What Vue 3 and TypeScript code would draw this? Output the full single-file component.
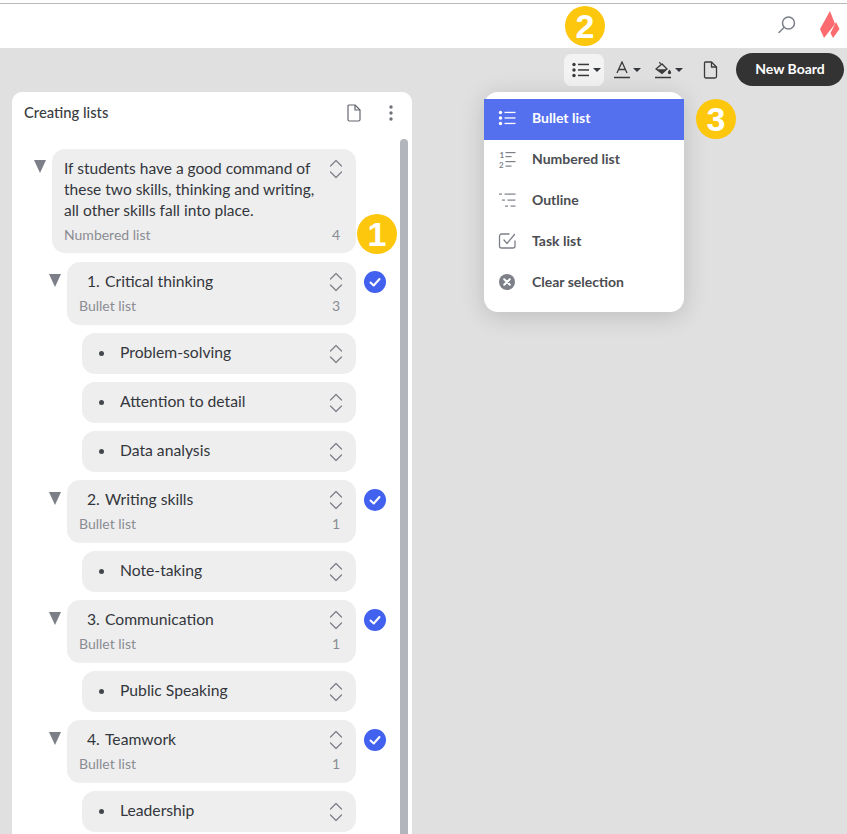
<script setup lang="ts">
interface Group { num: string; title: string; count: string; leaves: string[] }
const groups: Group[] = [
  { num: '1.', title: 'Critical thinking', count: '3', leaves: ['Problem-solving', 'Attention to detail', 'Data analysis'] },
  { num: '2.', title: 'Writing skills', count: '1', leaves: ['Note-taking'] },
  { num: '3.', title: 'Communication', count: '1', leaves: ['Public Speaking'] },
  { num: '4.', title: 'Teamwork', count: '1', leaves: ['Leadership'] },
]
const menu = [
  { label: 'Bullet list', icon: 'bullet', active: true },
  { label: 'Numbered list', icon: 'number', active: false },
  { label: 'Outline', icon: 'outline', active: false },
  { label: 'Task list', icon: 'task', active: false },
  { label: 'Clear selection', icon: 'clear', active: false },
]
</script>

<template>
  <div class="page">
    <header class="top">
      <svg class="search" width="20" height="20" viewBox="0 0 20 20" fill="none" stroke="#7b7f88" stroke-width="1.5"><circle cx="11.5" cy="8" r="6" /><path d="M7 12.5 2 17.5" stroke-linecap="round" /></svg>
      <svg class="logo" width="21" height="28" viewBox="0 0 21 28"><path d="M11 0 16 13 5 27 1 18Z" fill="#fb6b6f" /><path d="M17 11 20.500 18 14 27 11.500 22Z" fill="#fb6b6f" /></svg>
    </header>

    <div class="toolbar">
      <button class="tool tool-on">
        <svg width="18" height="16" viewBox="0 0 18 16" fill="#3a3a3a"><circle cx="2" cy="2.500" r="1.700" /><circle cx="2" cy="8" r="1.700" /><circle cx="2" cy="13.500" r="1.700" /><rect x="6" y="1.700" width="11" height="1.500" /><rect x="6" y="7.200" width="11" height="1.500" /><rect x="6" y="12.700" width="11" height="1.500" /></svg>
        <i class="caret" />
      </button>
      <button class="tool">
        <svg width="16" height="18" viewBox="0 0 16 18" fill="none" stroke="#3a3a3a" stroke-width="1.300"><path d="M3 12 8 1l5 11M4.600 8.500h6.800" /><path d="M0 16.500h16" stroke-width="1.500" /></svg>
        <i class="caret" />
      </button>
      <button class="tool">
        <svg width="17" height="18" viewBox="0 0 17 18" fill="none" stroke="#3a3a3a" stroke-width="1.300"><path d="M1 8 7 3l5 5-5 4.500Z" /><path d="M1.500 8.200 7 12.500 11.700 8.200Z" fill="#3a3a3a" stroke="none" /><path d="M5.500 3 4.500 1" /><path d="M14.500 8.500c1 1.500 1.700 2.200 1.700 3a1.700 1.700 0 0 1-3.400 0c0-.8.700-1.500 1.700-3Z" fill="#3a3a3a" stroke="none" /><path d="M0 16.500h16" stroke-width="1.500" /></svg>
        <i class="caret" />
      </button>
      <button class="tool tool-doc">
        <svg width="15" height="18" viewBox="0 0 14 18" fill="none" stroke="#3a3a3a" stroke-width="1.300" stroke-linejoin="round"><path d="M2 1h6l5 5v9.500a1.500 1.500 0 0 1-1.500 1.500h-9A1.500 1.500 0 0 1 1 15.500V2a1 1 0 0 1 1-1Z" /><path d="M8 1v5h5" /></svg>
      </button>
      <button class="new-board">New Board</button>
    </div>

    <main class="workspace">
      <section class="panel">
        <div class="panel-head">
          <h2>Creating lists</h2>
          <svg class="head-doc" width="14" height="18" viewBox="0 0 14 18" fill="none" stroke="#63666e" stroke-width="1.200" stroke-linejoin="round"><path d="M2 1h6l5 5v9.500a1.500 1.500 0 0 1-1.500 1.500h-9A1.500 1.500 0 0 1 1 15.500V2a1 1 0 0 1 1-1Z" /><path d="M8 1v5h5" /></svg>
          <svg class="head-more" width="4" height="16" viewBox="0 0 4 16" fill="#6f7279"><circle cx="2" cy="2" r="1.700" /><circle cx="2" cy="8" r="1.700" /><circle cx="2" cy="14" r="1.700" /></svg>
        </div>

        <div class="tree">
          <div class="scrollbar" />
          <div class="row row-root">
            <i class="tri" />
            <div class="card card-root">
              <div class="card-main">
                <p class="root-text">If students have a good command of these two skills, thinking and writing, all other skills fall into place.</p>
                <svg class="updown" width="14" height="20" viewBox="0 0 14 20" fill="none" stroke="#7c7f87" stroke-width="1.200" stroke-linecap="round" stroke-linejoin="round"><path d="M1.500 7 7 1.500 12.500 7M1.500 13 7 18.500 12.500 13" /></svg>
              </div>
              <div class="meta"><span>Numbered list</span><span>4</span></div>
            </div>
          </div>

          <template v-for="g in groups" :key="g.num">
            <div class="row row-group">
              <i class="tri" />
              <div class="card">
                <div class="card-main">
                  <span class="num">{{ g.num }}</span>
                  <span class="title">{{ g.title }}</span>
                  <svg class="updown" width="14" height="20" viewBox="0 0 14 20" fill="none" stroke="#7c7f87" stroke-width="1.200" stroke-linecap="round" stroke-linejoin="round"><path d="M1.500 7 7 1.500 12.500 7M1.500 13 7 18.500 12.500 13" /></svg>
                </div>
                <div class="meta"><span>Bullet list</span><span>{{ g.count }}</span></div>
              </div>
              <svg class="check" width="22" height="22" viewBox="0 0 22 22"><circle cx="11" cy="11" r="11" fill="#4261ee" /><path d="M6.500 11.500 9.700 14.500 15.500 8" fill="none" stroke="#fff" stroke-width="2" stroke-linecap="round" stroke-linejoin="round" /></svg>
            </div>
            <div v-for="leaf in g.leaves" :key="leaf" class="row row-leaf">
              <div class="card leaf">
                <i class="dot" />
                <span class="title">{{ leaf }}</span>
                <svg class="updown" width="14" height="20" viewBox="0 0 14 20" fill="none" stroke="#7c7f87" stroke-width="1.200" stroke-linecap="round" stroke-linejoin="round"><path d="M1.500 7 7 1.500 12.500 7M1.500 13 7 18.500 12.500 13" /></svg>
              </div>
            </div>
          </template>
        </div>
      </section>

      <nav class="menu">
        <div v-for="m in menu" :key="m.label" class="menu-item" :class="{ active: m.active }">
          <svg v-if="m.icon === 'bullet'" width="18" height="16" viewBox="0 0 18 16" fill="#fff"><circle cx="2.500" cy="2.500" r="1.700" /><circle cx="2.500" cy="8" r="1.700" /><circle cx="2.500" cy="13.500" r="1.700" /><rect x="6.500" y="1.800" width="11" height="1.300" /><rect x="6.500" y="7.300" width="11" height="1.300" /><rect x="6.500" y="12.800" width="11" height="1.300" /></svg>
          <svg v-else-if="m.icon === 'number'" width="18" height="18" viewBox="0 0 18 18" fill="#7d8089"><text x="1.500" y="7.500" font-size="8" font-weight="700" font-family="Lato, sans-serif">1</text><text x="1" y="17.500" font-size="8" font-weight="700" font-family="Lato, sans-serif">2</text><rect x="7.500" y="2" width="10" height="1.200" /><rect x="7.500" y="6" width="6" height="1.200" /><rect x="7.500" y="11" width="10" height="1.200" /><rect x="7.500" y="15.500" width="6" height="1.200" /></svg>
          <svg v-else-if="m.icon === 'outline'" width="18" height="16" viewBox="0 0 18 16" fill="#7d8089"><rect x="1" y="1.500" width="3" height="1.200" /><rect x="6.500" y="1.500" width="11" height="1.200" /><rect x="4" y="7.500" width="3" height="1.200" /><rect x="9.500" y="7.500" width="8" height="1.200" /><rect x="7" y="13.500" width="3" height="1.200" /><rect x="12.500" y="13.500" width="5" height="1.200" /></svg>
          <svg v-else-if="m.icon === 'task'" width="18" height="18" viewBox="0 0 18 18" fill="none" stroke="#7d8089" stroke-width="1.300" stroke-linecap="round" stroke-linejoin="round"><path d="M11 2H3.500A2 2 0 0 0 1.500 4v10a2 2 0 0 0 2 2H15a2 2 0 0 0 2-2V9" /><path d="M6 8l3 3.500 7.500-9" /></svg>
          <svg v-else width="18" height="16" viewBox="0 0 18 16"><circle cx="9" cy="8" r="8" fill="#7d8089" /><path d="M6.200 5.200l5.600 5.600M11.800 5.200l-5.600 5.600" stroke="#fff" stroke-width="2" stroke-linecap="round" /></svg>
          <span>{{ m.label }}</span>
        </div>
      </nav>
    </main>

    <span class="badge badge-1">1</span>
    <span class="badge badge-2">2</span>
    <span class="badge badge-3">3</span>
  </div>
</template>

<style>
html, body { margin: 0; background: #e0e0e0; overflow: hidden; }
</style>

<style scoped>
.page {
  position: relative;
  width: 847px;
  height: 834px;
  overflow: hidden;
  display: flex;
  flex-direction: column;
  background: #e0e0e0;
  font-family: Lato, "Noto Sans", sans-serif;
  color: #33363c;
}
.top {
  height: 44px;
  margin-top: 3px;
  border-top: 1px solid #b8b8b8;
  background: #fff;
  flex: none;
  display: flex;
  align-items: center;
  justify-content: flex-end;
  padding-right: 7px;
  gap: 22px;
  box-shadow: 0 -3px 0 #fdfdfd;
}
.search { margin-top: -2px; }
.logo { margin-top: -2px; }
.toolbar {
  height: 33px;
  margin-top: 5px;
  flex: none;
  display: flex;
  align-items: center;
  padding-left: 564px;
}
.tool {
  border: 0;
  background: none;
  padding: 0;
  display: flex;
  align-items: center;
  gap: 3px;
  height: 32px;
  margin-right: 9px;
  width: 32px;
}
.tool-on {
  width: 40px;
  margin-right: 10px;
  padding-left: 8px;
  background: #f3f3f3;
  border-radius: 7px;
  box-sizing: border-box;
}
.tool-doc { width: 15px; margin-left: 7px; margin-right: 18px; }
.caret {
  width: 0;
  height: 0;
  border-left: 4px solid transparent;
  border-right: 4px solid transparent;
  border-top: 4px solid #33363c;
}
.new-board {
  width: 108px;
  height: 33px;
  border: 0;
  border-radius: 17px;
  background: #333333;
  color: #fff;
  font: 700 14px Lato, sans-serif;
  padding: 0 0 2px;
}
.workspace {
  position: relative;
  flex: 1;
  min-height: 0;
  padding: 6px 0 0 12px;
}
.panel {
  width: 400px;
  height: 100%;
  background: #fff;
  border-radius: 10px 10px 0 0;
  overflow: hidden;
}
.panel-head {
  height: 47px;
  box-sizing: border-box;
  padding: 0 19px 5px 12px;
  display: flex;
  align-items: center;
}
.panel-head h2 {
  margin: 0;
  padding-bottom: 2px;
  flex: 1;
  font-size: 14.800px;
  font-weight: 500;
  color: #3a3d42;
}
.head-doc { margin-right: 28px; }
.tree {
  position: relative;
  padding: 10px 0 0 22px;
  display: flex;
  flex-direction: column;
  gap: 8px;
}
.scrollbar {
  position: absolute;
  left: 388px;
  top: 0;
  bottom: -40px;
  width: 8px;
  border-radius: 4px 4px 0 0;
  background: #b3b5bc;
}
.row { position: relative; display: flex; align-items: flex-start; }
.row-root { padding-left: 18px; width: 304px; margin-bottom: 1px; }
.row-group { padding-left: 33px; width: 289px; }
.row-leaf { padding-left: 48px; width: 274px; }
.tri {
  position: absolute;
  top: 12px;
  width: 0;
  height: 0;
  border-left: 6.500px solid transparent;
  border-right: 6.500px solid transparent;
  border-top: 13px solid #7c7f87;
}
.row-root .tri { left: 0; top: 11px; }
.row-group .tri { left: 15px; }
.card {
  flex: 1;
  min-width: 0;
  background: #eeeeee;
  border-radius: 13px;
  padding: 8px 13px 10px 12px;
  box-sizing: border-box;
}
.card-root { padding-bottom: 9px; }
.card-root .meta { margin-top: 4px; }
.card-main { display: flex; align-items: flex-start; min-height: 22px; padding-top: 2px; }
.root-text {
  margin: -1px 0 1px;
  width: 252px;
  flex: none;
  font-size: 15.500px;
  line-height: 21px;
  color: #33363c;
}
.updown { flex: none; margin-left: auto; }
.num { font-size: 15.700px; line-height: 21px; width: 26px; padding-left: 8px; box-sizing: border-box; flex: none; margin-top: -1px; }
.title { font-size: 15.700px; line-height: 21px; color: #33363c; margin-top: -1px; }
.meta {
  display: flex;
  justify-content: space-between;
  margin-top: 3px;
  padding-right: 3px;
  font-size: 14px;
  line-height: 18px;
  color: #8a8c93;
}
.leaf {
  height: 41px;
  display: flex;
  align-items: center;
  padding: 0 13px 0 17px;
}
.leaf .title { margin-top: -2px; }
.dot {
  width: 5px;
  height: 5px;
  border-radius: 50%;
  background: #44474d;
  margin-right: 16px;
  flex: none;
}
.check { position: absolute; left: 330px; top: 9px; }
.menu {
  position: absolute;
  left: 484px;
  top: 6px;
  width: 200px;
  height: 220px;
  box-sizing: border-box;
  padding-top: 7px;
  background: #fff;
  border-radius: 14px;
  box-shadow: 0 4px 24px rgba(0, 0, 0, 0.16);
}
.menu-item {
  height: 41px;
  box-sizing: border-box;
  padding: 0 0 3px 14px;
  display: flex;
  align-items: center;
  font-size: 14px;
  font-weight: 700;
  color: #4b4d52;
}
.menu-item svg { width: 18px; flex: none; }
.menu-item span { margin-left: 16px; padding-bottom: 2px; }
.menu-item.active { background: #5570ef; color: #fff; }
.badge {
  position: absolute;
  width: 40px;
  height: 40px;
  border-radius: 50%;
  background: #fdc70d;
  color: #fff;
  font: 700 34px/40px "Liberation Sans", sans-serif;
  text-align: center;
}
.badge-1 { left: 357px; top: 214px; }
.badge-2 { left: 565px; top: 6px; }
.badge-3 { left: 696px; top: 99px; }
</style>
